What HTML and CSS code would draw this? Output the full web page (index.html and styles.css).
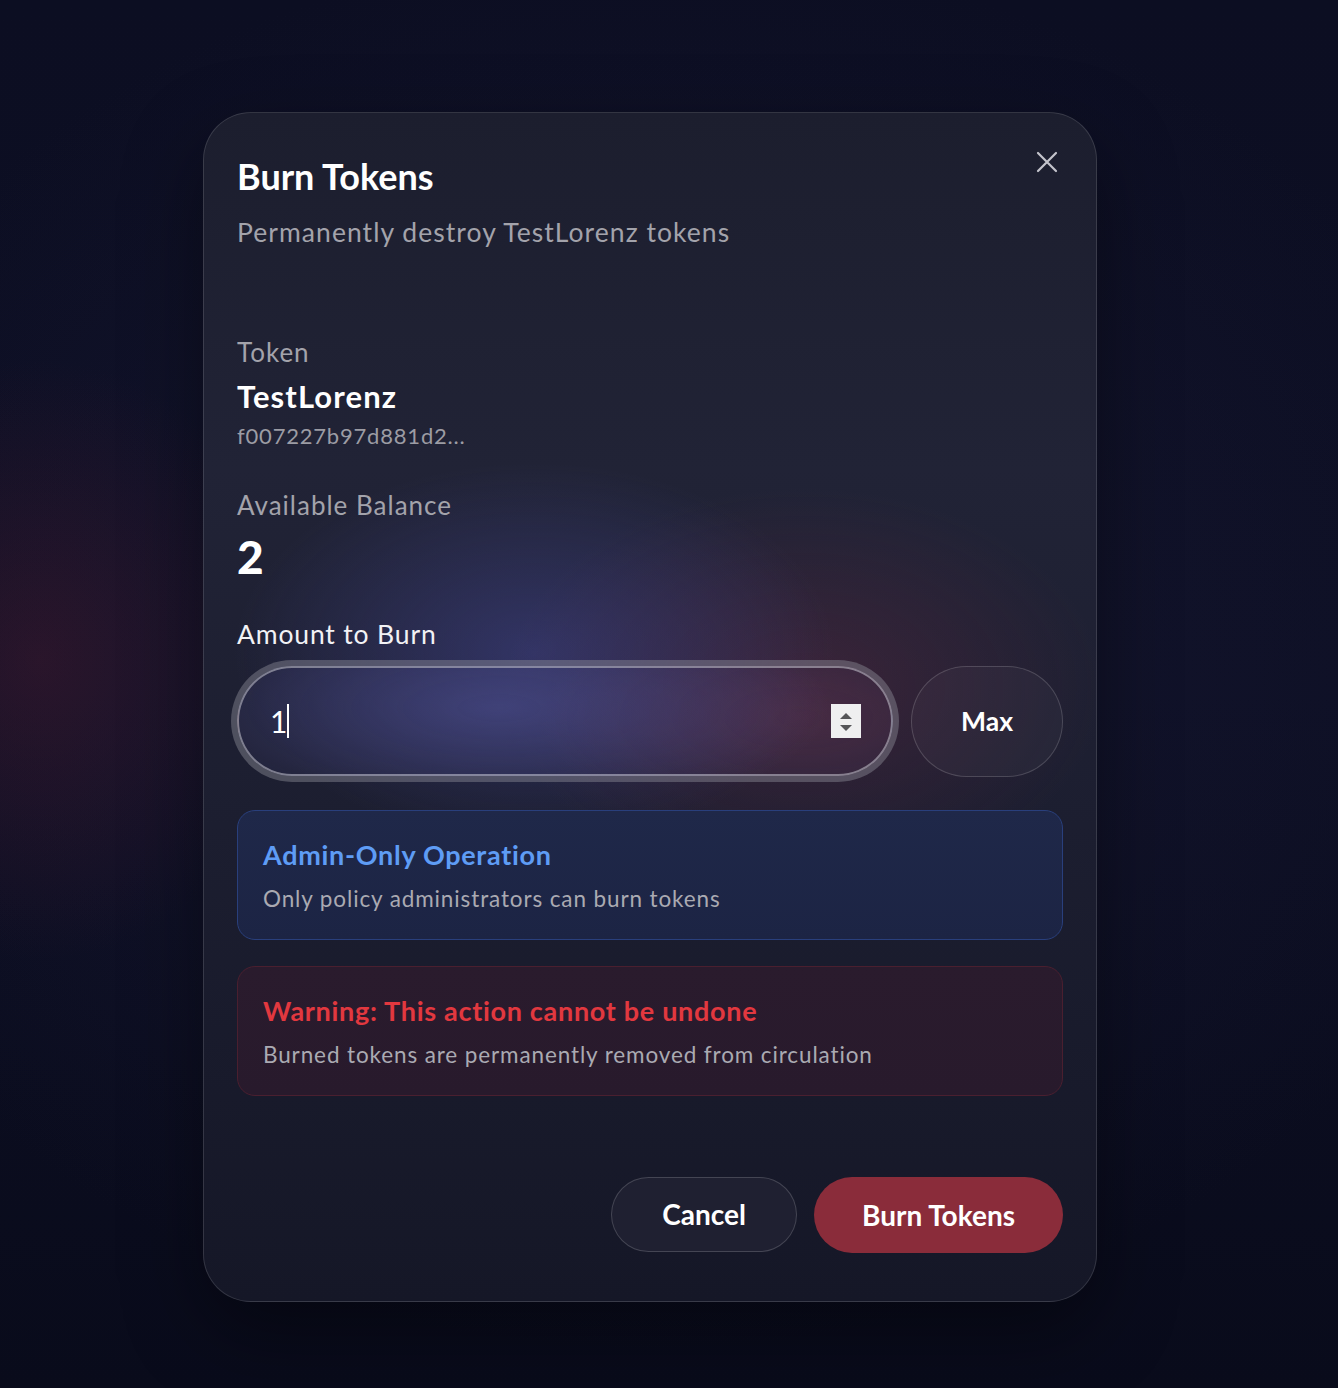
FILE: index.html
```html
<!DOCTYPE html>
<html lang="en">
<head>
<meta charset="utf-8">
<title>Burn Tokens</title>
<link rel="stylesheet" href="styles.css">
</head>
<body>
<div class="page">
  <div class="modal">
    <button class="close" aria-label="Close">
      <svg width="24" height="24" viewBox="0 0 24 24"><path d="M3 3 L21 21 M21 3 L3 21" stroke="#c4c4cc" stroke-width="2.2" stroke-linecap="round" fill="none"/></svg>
    </button>
    <h1 class="title">Burn Tokens</h1>
    <p class="subtitle">Permanently destroy TestLorenz tokens</p>

    <div class="label token-label">Token</div>
    <div class="token-name">TestLorenz</div>
    <div class="token-hash">f007227b97d881d2...</div>

    <div class="label balance-label">Available Balance</div>
    <div class="balance">2</div>

    <div class="amount-label">Amount to Burn</div>
    <div class="amount-row">
      <div class="input">
        <span class="input-value">1</span><span class="caret"></span>
        <span class="spinner">
          <svg width="30" height="34" viewBox="0 0 30 34"><rect width="30" height="34" fill="#efeff0"/><path d="M15 9 L21 15 L9 15 Z" fill="#555558"/><path d="M9 21 L21 21 L15 27 Z" fill="#555558"/></svg>
        </span>
      </div>
      <button class="max">Max</button>
    </div>

    <div class="notice info">
      <div class="notice-title">Admin-Only Operation</div>
      <div class="notice-body">Only policy administrators can burn tokens</div>
    </div>
    <div class="notice danger">
      <div class="notice-title">Warning: This action cannot be undone</div>
      <div class="notice-body">Burned tokens are permanently removed from circulation</div>
    </div>

    <div class="actions">
      <button class="btn cancel">Cancel</button>
      <button class="btn burn">Burn Tokens</button>
    </div>
  </div>
</div>
</body>
</html>
```
FILE: styles.css
```css
* { box-sizing: border-box; }
html, body { margin: 0; padding: 0; }
body {
  min-height: 1388px;
  font-family: "Lato", "Liberation Sans", sans-serif;
  color: #fff;
  background:
    radial-gradient(ellipse 260px 300px at 40px 660px, rgba(90, 28, 48, 0.35), transparent 100%),
    radial-gradient(ellipse 900px 700px at 650px 650px, rgba(30, 30, 60, 0.5), transparent 100%),
    linear-gradient(180deg, #0c0e22 0%, #0d0f24 50%, #090b1b 100%);
}
.page {
  padding: 112px 0 0 203px;
}
.modal {
  position: relative;
  width: 894px;
  height: 1190px;
  border-radius: 48px;
  border: 1px solid rgba(255, 255, 255, 0.13);
  padding: 42px 33px 0 33px;
  background:
    radial-gradient(ellipse 300px 190px at 330px 540px, rgba(78, 80, 170, 0.42), transparent 100%),
    radial-gradient(ellipse 300px 200px at 600px 575px, rgba(120, 44, 70, 0.32), transparent 100%),
    linear-gradient(180deg, #1c1e2e 0%, #212336 30%, #1c1e30 60%, #151727 100%);
  box-shadow: 0 30px 80px rgba(0, 0, 0, 0.4);
}
.close {
  position: absolute;
  top: 37px;
  right: 37px;
  width: 24px;
  height: 24px;
  padding: 0;
  border: 0;
  background: none;
  display: block;
}
.close svg { display: block; }
.title {
  margin: 0;
  font-size: 36px;
  line-height: 1.2;
  font-weight: 700;
  color: #ffffff;
}
.subtitle {
  margin: 19px 0 0;
  font-size: 26.5px;
  line-height: 1.2;
  letter-spacing: 1.05px;
  color: #a3a3ab;
}
.label {
  font-size: 26px;
  line-height: 1.2;
  letter-spacing: 1px;
  color: #a3a3ab;
}
.token-label { margin-top: 88px; }
.token-name {
  margin-top: 10px;
  font-size: 31px;
  line-height: 1.2;
  letter-spacing: 1.1px;
  font-weight: 700;
  color: #fff;
}
.token-hash {
  margin-top: 8px;
  font-size: 22px;
  line-height: 1.2;
  letter-spacing: 0.8px;
  color: #9c9ca4;
}
.balance-label { margin-top: 40px; }
.balance {
  margin-top: 8px;
  font-size: 46px;
  line-height: 1.2;
  font-weight: 900;
  color: #fff;
}
.amount-label {
  margin-top: 35px;
  font-size: 26.5px;
  line-height: 1.2;
  letter-spacing: 0.85px;
  color: #f2f2f5;
}
.amount-row {
  margin-top: 15px;
  display: flex;
  gap: 18px;
  align-items: center;
}
.input {
  flex: 0 0 656px;
  height: 110px;
  border-radius: 55px;
  border: 2px solid rgba(200, 200, 210, 0.55);
  box-shadow: 0 0 0 6px rgba(140, 140, 150, 0.45);
  background:
    radial-gradient(ellipse 330px 110px at 260px 40px, rgba(90, 92, 170, 0.45), transparent 100%),
    radial-gradient(ellipse 260px 110px at 560px 50px, rgba(110, 55, 80, 0.35), transparent 100%),
    rgba(40, 40, 70, 0.35);
  display: flex;
  align-items: center;
  padding: 0 30px 0 31px;
}
.input-value {
  font-size: 30px;
  line-height: 1;
  color: #fff;
}
.caret {
  display: inline-block;
  width: 2px;
  height: 34px;
  background: #fff;
  margin-left: 0;
}
.spinner {
  margin-left: auto;
  display: block;
  width: 30px;
  height: 34px;
}
.spinner svg { display: block; }
.max {
  flex: 0 0 152px;
  height: 111px;
  border-radius: 56px;
  border: 1.5px solid rgba(255, 255, 255, 0.16);
  background: rgba(255, 255, 255, 0.03);
  color: #fff;
  font-family: inherit;
  font-size: 26.5px;
  font-weight: 700;
}
.notice {
  border-radius: 18px;
  height: 130px;
  padding: 28px 25px 0 25px;
}
.notice.info {
  margin-top: 33px;
  background: linear-gradient(180deg, #1f2849 0%, #1c2444 100%);
  border: 1.5px solid #293f7c;
}
.notice.danger {
  margin-top: 26px;
  background: linear-gradient(180deg, #2a1b2d 0%, #281a2c 100%);
  border: 1.5px solid #4a1f2f;
}
.notice-title {
  font-size: 27px;
  line-height: 1.2;
  letter-spacing: 0.7px;
  font-weight: 700;
}
.info .notice-title { color: #5e9cf5; }
.danger .notice-title { color: #e2383f; }
.notice-body {
  margin-top: 14px;
  font-size: 22.5px;
  line-height: 1.2;
  letter-spacing: 0.88px;
  color: #aaaab2;
}
.actions {
  margin-top: 81px;
  display: flex;
  justify-content: flex-end;
  gap: 17px;
}
.btn {
  font-family: inherit;
  font-size: 28px;
  font-weight: 700;
  color: #fff;
  border-radius: 40px;
  height: 76px;
}
.cancel {
  width: 186px;
  background: #1f2031;
  border: 1.5px solid rgba(255, 255, 255, 0.17);
  height: 75px;
}
.burn {
  width: 249px;
  background: #8a2c3a;
  border: 0;
}
```
